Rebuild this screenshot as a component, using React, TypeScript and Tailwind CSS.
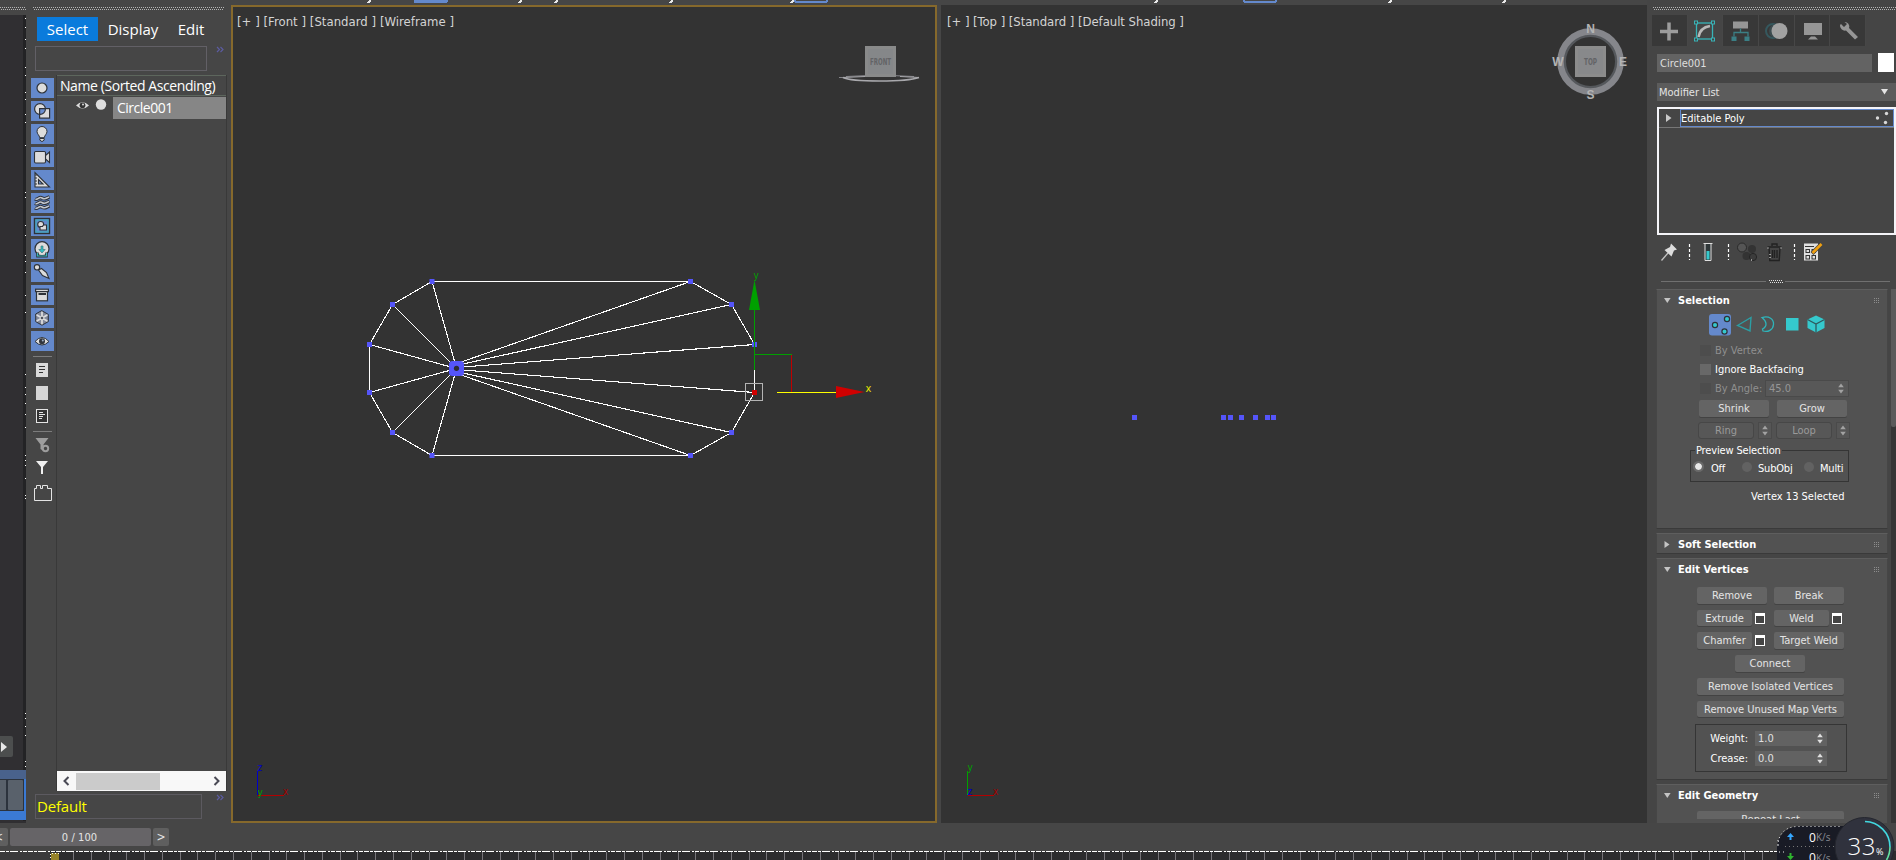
import React from "react";

const UI = "font-['DejaVu_Sans_Condensed','DejaVu_Sans',sans-serif]";

/* ---------- small shared pieces ---------- */

function DottedGrip({ className = "" }: { className?: string }) {
  return (
    <svg className={className} height="3" width="100%" shapeRendering="crispEdges">
      <line x1="0" y1="0.5" x2="100%" y2="0.5" stroke="#b4b4b4" strokeDasharray="1 1" />
      <line x1="1" y1="2.5" x2="100%" y2="2.5" stroke="#b4b4b4" strokeDasharray="1 1" />
    </svg>
  );
}

function Btn({ children, className = "", dim = false }: { children: React.ReactNode; className?: string; dim?: boolean }) {
  return (
    <div
      className={`flex shrink-0 items-center justify-center whitespace-nowrap rounded-[2px] text-[11px] leading-none ${
        dim ? "bg-[#575757] text-[#9a9a9a] outline outline-1 outline-[#474747]" : "bg-[#646464] text-[#e4e4e4] shadow-[0_1px_0_#434343]"
      } ${className}`}
    >
      {children}
    </div>
  );
}

function Spin({ dim = false }: { dim?: boolean }) {
  return (
    <svg width="6" height="11" viewBox="0 0 6 11" className="shrink-0">
      <path d="M3 0.5 5.8 4.2H0.2ZM3 10.5 5.8 6.8H0.2Z" fill={dim ? "#a2a2a2" : "#e0e0e0"} />
    </svg>
  );
}

function SettingsBox() {
  return <div className="h-[11px] w-[10px] shrink-0 border border-t-[3px] border-white bg-[#444]" />;
}

function RolloutTitle({ title, open = true }: { title: string; open?: boolean }) {
  return (
    <div className="flex h-[21px] shrink-0 items-center pl-[7px] pr-[7px]">
      <svg width="7" height="8" viewBox="0 0 7 8" className="shrink-0">
        <path d={open ? "M0 1H6.6L3.3 6Z" : "M0.5 0V7L5.5 3.5Z"} fill="#c4c4c4" />
      </svg>
      <span className="ml-[7px] flex-1 whitespace-nowrap text-[11px] font-bold leading-none text-white">{title}</span>
      <svg width="6" height="6" shapeRendering="crispEdges">
        {[0, 2, 4].map((y) =>
          [0, 2, 4].map((x) => <rect key={`${x}-${y}`} x={x} y={y} width="1" height="1" fill="#8d8d8d" />)
        )}
      </svg>
    </div>
  );
}

/* ---------- far left strip ---------- */

const specks = [18, 27, 39, 48, 67, 75, 92, 99, 114, 122, 145, 192, 197, 225, 235, 255, 261, 272, 295, 312, 374, 387, 394, 403, 414, 427, 455, 460, 465, 478, 495, 498, 713, 718, 726, 735, 761, 766];

function EdgeStrip() {
  return (
    <div className="flex w-[26px] shrink-0 flex-col">
      <DottedGrip className="mt-[7px]" />
      <div className="relative mt-[5px] flex h-[808px] flex-col bg-[#302f32]">
        <svg className="absolute inset-0" width="26" height="806" shapeRendering="crispEdges">
          <rect x="23" width="3" height="806" fill="#232325" />
          {specks.map((y) => (
            <rect key={y} x="25" y={y - 15} width="1" height="1" fill="#fff" />
          ))}
        </svg>
        <div className="mt-[721px] flex h-[21px] w-[13px] items-center rounded-r-[2px] bg-[#4c4e4e]">
          <svg width="8" height="10"><path d="M1 0V10L7 5Z" fill="#e8e8e8" /></svg>
        </div>
        <div className="relative mt-[13px] flex h-[50px] w-[26px] flex-col bg-[#3b7ad4]">
          <div className="h-[9px] bg-[#49628c]" />
          <div className="flex h-[32px] w-[24px] gap-[2px] bg-[#2c333d] py-[1px] pr-[1px]">
            <div className="w-[6px] bg-[#59616b]" />
            <div className="flex-1 rounded-[1px] bg-[#59616b]" />
          </div>
        </div>
      </div>
    </div>
  );
}

/* ---------- scene explorer ---------- */

const dk = "#2e3238";
const lt = "#dcdcdc";

const filterIcons: React.ReactNode[] = [
  <circle cx="11" cy="10" r="5" fill={lt} stroke={dk} strokeWidth="1.2" />,
  <g fill={lt} stroke={dk} strokeWidth="1.2">
    <circle cx="9" cy="8" r="5.4" />
    <rect x="8.6" y="7.6" width="10" height="9.5" fill="#dcdcdc" />
    <path d="M8.6 13.4A5.4 5.4 0 0 0 14.4 7.6H8.6Z" fill="#6b8fd0" />
  </g>,
  <g fill={lt} stroke={dk} strokeWidth="1">
    <path d="M11 2.5a5 5 0 0 1 5 5c0 2.500-2.500 3.800-2.700 6.200H8.700C8.500 11.300 6 10 6 7.500a5 5 0 0 1 5-5Z" />
    <path d="M8.800 14.500h4.400v1.600L11 17.600l-2.200-1.500Z" />
  </g>,
  <g fill={lt} stroke={dk} strokeWidth="1.100">
    <path d="M14.500 8.500 18.500 5V15.500L14.500 12Z" />
    <rect x="3.500" y="4.500" width="11" height="11.500" rx="1.200" />
  </g>,
  <g fill={lt} stroke={dk} strokeWidth="1.100">
    <path d="M4 2.500V17H18.500Z" />
    <path d="M7.500 9.500V14H12Z" fill="#6b8fd0" />
    <path d="M4 5h2M4 8h2M4 11h2M4 14h2" />
  </g>,
  <g fill="none">
    {[5, 9.5, 14].map((y) => (
      <g key={y}>
        <path d={`M4 ${y + 1}C7 ${y + 2.500} 8 ${y - 2} 11 ${y} S15 ${y} 18.500 ${y - 1}`} stroke={dk} strokeWidth="3.600" />
        <path d={`M4.500 ${y + 1}C7 ${y + 2.500} 8 ${y - 2} 11 ${y} S15 ${y} 18 ${y - 1}`} stroke="#c4c8d0" strokeWidth="1.600" />
      </g>
    ))}
  </g>,
  <g>
    <rect x="3.500" y="2.500" width="15" height="15" fill="#6489cc" stroke={dk} strokeWidth="1.400" />
    <rect x="5" y="4" width="12" height="12" fill="none" stroke="#38aeb6" strokeWidth="1" />
    <circle cx="9.700" cy="8.500" r="3" fill={lt} stroke={dk} strokeWidth="1.100" />
    <path d="M9 14V10.500H11.500L12.500 9H15.500V14Z" fill={lt} stroke={dk} strokeWidth="1.100" />
  </g>,
  <g>
    <circle cx="11" cy="9.700" r="7" fill={lt} stroke={dk} strokeWidth="1.200" />
    <path d="M6.500 13.500v3.800h9V13.500" stroke={dk} strokeWidth="2.600" fill="none" />
    <path d="M6.500 14v3h9V14" stroke="#38b4ba" strokeWidth="1.200" fill="none" />
    <path d="M10 7h2v3.500h2.200L11 14 7.800 10.500H10Z" fill="#35c0c4" stroke="#3b6b70" strokeWidth=".6" />
  </g>,
  <g fill={lt} stroke={dk} strokeWidth="1.100">
    <path d="M7.500 8 10.500 6.500 15.500 10.500 18 16.500 11.500 13.500Z" />
    <circle cx="6" cy="5.300" r="2.700" />
  </g>,
  <g fill={lt} stroke={dk} strokeWidth="1.200">
    <rect x="5.500" y="6" width="11" height="9.800" />
    <rect x="4.600" y="4.200" width="12.800" height="2.400" />
    <path d="M7.500 9H15" strokeWidth="2" />
  </g>,
  <g strokeLinecap="round">
    <path d="M11 2.800 17.300 6.400V13.600L11 17.200 4.700 13.600V6.400Z" fill="#83899a" stroke={dk} />
    <path d="M11 4.500V15.500M6.200 7.200 15.800 12.800M15.800 7.200 6.200 12.800" stroke="#dcdcdc" strokeWidth="1.800" />
    <circle cx="11" cy="10" r="1.300" fill="#50545c" />
  </g>,
  <g>
    <path d="M4 10.500Q11 2.500 18 10.500Q11 17.500 4 10.500Z" fill={lt} stroke={dk} />
    <circle cx="11" cy="10.200" r="3" fill="#30343c" />
    <circle cx="11.800" cy="9.400" r="1" fill="#9fb0c8" />
  </g>,
];

function Chevrons() {
  return (
    <svg width="8" height="7" fill="none" stroke="#5c5ca0" strokeWidth="1.200">
      <path d="M1 1 3.500 3.500 1 6M4.500 1 7 3.500 4.500 6" />
    </svg>
  );
}

function Explorer() {
  return (
    <div className="flex w-[205px] shrink-0 flex-col font-['Open_Sans','Noto_Sans',sans-serif] text-[15px] text-white">
      <div className="px-[7px] pt-[7px]"><DottedGrip className="block" /></div>
      <div className="ml-[11px] mt-[7px] flex h-[24px] leading-[25px]">
        <div className="w-[61px] bg-[#0a7bdc] text-center text-[15px]">Select</div>
        <div className="w-[70px] text-center">Display</div>
        <div className="w-[46px] text-center">Edit</div>
      </div>
      <div className="ml-[9px] mt-[5px] flex h-[25px] items-start">
        <div className="h-[25px] w-[172px] border border-[#626066]" />
        <div className="ml-[9px]"><Chevrons /></div>
      </div>
      <div className="mt-[4px] flex h-[716px]">
        <div className="flex w-[30px] shrink-0 flex-col items-start pl-[5px] pt-[3px]">
          <div className="flex flex-col gap-[3px]">
            {filterIcons.map((ic, i) => (
              <div key={i} className="h-[20px] w-[23px] bg-[#6489cc]">
                <svg width="23" height="20" viewBox="0 0 23 20">{ic}</svg>
              </div>
            ))}
          </div>
          <svg width="23" height="152" viewBox="0 351 23 152" className="block">
            <path d="M2 356.500H21M2 431.500H21" stroke="#7c7c7c" />
            <rect x="5" y="363" width="12" height="14" fill="#dadada" />
            <path d="M8 366.500h6M8 369.500h6M8 372.500h4" stroke="#333" />
            <rect x="5" y="386" width="12" height="14" fill="#d6d6d6" />
            <rect x="5.500" y="409.500" width="11" height="13" fill="#333" stroke="#e4e4e4" />
            <path d="M8 412.500h4M8 414.500h6M8 416.500h4M8 418.500h3" stroke="#e4e4e4" />
            <path d="M4.500 438H17.500L12.500 444.500V451L9.500 449V444.500Z" fill="#9d9d9d" />
            <circle cx="14.500" cy="448.500" r="2.700" fill="#444" stroke="#9d9d9d" strokeWidth="2" />
            <path d="M5 461H17L12 467V474H10V467Z" fill="#f0f0f0" />
            <path d="M3.500 488.500H5.500V485.500H9.500V488.500H11.500V485.500H16.500V488.500H20.500V500.500H3.500Z" fill="none" stroke="#e4e4e4" />
          </svg>
        </div>
        <div className="flex w-[171px] flex-col border-x border-[#393939]">
          <div className="h-[21px] whitespace-nowrap border-b border-t border-[#5d665d] pl-[3px] text-[14px] leading-[20px] tracking-[-0.42px]">Name (Sorted Ascending)</div>
          <div className="flex h-[23px] pt-[1px]">
            <svg width="56" height="20" className="shrink-0">
              <path d="M19 8.500Q25.500 2 32 8.500Q25.500 14.500 19 8.500Z" fill="#dedede" />
              <circle cx="25.500" cy="8.300" r="2.900" fill="#333" />
              <circle cx="26" cy="7.600" r="1" fill="#ddd" />
              <circle cx="44" cy="7.500" r="5.200" fill="#dedede" />
            </svg>
            <div className="h-[22px] flex-1 bg-[#868686] pl-[4px] text-[14px] leading-[21px] tracking-[-0.5px]">Circle001</div>
          </div>
          <div className="flex-1" />
          <div className="flex h-[20px] items-center bg-[#f8f8f8]">
            <svg width="19" height="18" fill="none" stroke="#4a4a55" strokeWidth="2"><path d="M11.500 5 7.500 9 11.500 13" /></svg>
            <div className="h-[17px] w-[84px] bg-[#cbcbcb]" />
            <div className="flex-1" />
            <svg width="19" height="18" fill="none" stroke="#4a4a55" strokeWidth="2"><path d="M7.500 5 11.500 9 7.500 13" /></svg>
          </div>
        </div>
      </div>
      <div className="ml-[9px] mt-[3px] flex items-start">
        <div className="h-[25px] w-[167px] border border-[#5c5a60] pl-[1px] text-[15px] leading-[23px] tracking-[-0.2px] text-[#ffff00]">Default</div>
        <div className="ml-[14px]"><Chevrons /></div>
      </div>
    </div>
  );
}

/* ---------- viewports ---------- */

const rim: [number, number][] = [
  [432, 281.5], [690.5, 281.5], [731.5, 304.5], [754.5, 344.5], [754.5, 392.5], [731.5, 432.5],
  [690.5, 455.5], [432, 455.5], [392.5, 432.5], [369.5, 392.5], [369.5, 344.5], [392.5, 304.5],
];

/* each spoke starts on a small 12-sided hub ring */
const hub = rim.map((_, i): [number, number] => {
  const a = ((105 - 30 * i) * Math.PI) / 180;
  return [456.5 + 5.5 * Math.cos(a), 368.5 - 5.5 * Math.sin(a)];
});

function FrontCanvas() {
  return (
    <svg className="absolute inset-0" width="702" height="814" viewBox="233 7 702 814" fontFamily="DejaVu Sans Condensed" >
      <g stroke="#fff" strokeWidth="1.1" fill="none" shapeRendering="crispEdges">
        <polygon points={rim.map((p) => p.join(",")).join(" ")} />
        {rim.map(([x, y], i) => <line key={`${x},${y}`} x1={hub[i][0]} y1={hub[i][1]} x2={x} y2={y} />)}
      </g>
      <g fill="#5555fa">
        {rim.map(([x, y], i) => i !== 4 && <rect key={i} x={x - 2.5} y={y - 2.5} width="5" height="5" />)}
        <rect x="449" y="361" width="15" height="15" rx="3.500" />
      </g>
      <circle cx="456.500" cy="368.300" r="2.600" fill="#2c2c34" />
      <g shapeRendering="crispEdges">
        <path d="M754.500 309V370M754.500 354.500H791.500" stroke="#00a000" />
        <path d="M791.500 355V392" stroke="#c00000" />
        <path d="M777 392.500H837" stroke="#ffff00" />
        <rect x="745.500" y="383.500" width="17" height="17" fill="none" stroke="#b4b4b4" />
        <rect x="752" y="390" width="5" height="5" fill="#d00000" />
      </g>
      <path d="M754.500 280 760 310H749Z" fill="#00a000" />
      <path d="M864.500 392 836 386V398Z" fill="#d00000" />
      <text x="753.500" y="279" fontSize="10" fill="#00a000">y</text>
      <text x="865.500" y="392" fontSize="11" fill="#e6e600">x</text>
      <g shapeRendering="crispEdges">
        <path d="M257.500 771V795" stroke="#0000c8" />
        <path d="M258 795.500H284" stroke="#b40000" />
      </g>
      <text x="257.500" y="771" fontSize="10" fill="#0000c8">z</text>
      <text x="257.500" y="796" fontSize="10" fill="#00a000">y</text>
      <text x="283" y="795" fontSize="10" fill="#a00000">x</text>
      <path d="M839 77.500H843M846 76.500Q879.500 73.500 914 76.500" fill="none" stroke="#85858a" strokeWidth="1" />
      <path d="M843 77.500Q850 81 879.500 81T919 77.500" fill="none" stroke="#a9a9ad" strokeWidth="1.600" />
      <path d="M919 77.500 900 76.500M843 77.500 865 76.500" fill="none" stroke="#a9a9ad" strokeWidth="1" />
      <rect x="865" y="46" width="31" height="31" fill="#898a8a" />
      <rect x="868" y="49" width="25" height="25" fill="#858789" />
      <text x="880.500" y="65" fontSize="8" fontWeight="bold" textAnchor="middle" fill="#626366" textLength="21" lengthAdjust="spacingAndGlyphs">FRONT</text>
    </svg>
  );
}

function TopCanvas() {
  return (
    <svg className="absolute inset-0" width="706" height="818" viewBox="941 5 706 818" fontFamily="DejaVu Sans Condensed">
      <g fill="#5555fa">
        {[1134.5, 1223.5, 1230.5, 1241.5, 1255.5, 1267.5, 1273.5].map((x) => (
          <rect key={x} x={x - 2.5} y="415" width="5" height="5" />
        ))}
      </g>
      <path d="M967.500 771V795" stroke="#00a000" shapeRendering="crispEdges" />
      <path d="M968 795.500H994" stroke="#b40000" shapeRendering="crispEdges" />
      <text x="967.500" y="771" fontSize="10" fill="#00a000">y</text>
      <text x="967.500" y="795" fontSize="10" fill="#0000c8">z</text>
      <text x="993" y="795" fontSize="10" fill="#a00000">x</text>
      <circle cx="1590.500" cy="61.500" r="26" fill="none" stroke="#55585c" strokeWidth="3" />
      <circle cx="1590.500" cy="61.500" r="30" fill="none" stroke="#85868b" strokeWidth="6.500" />
      <rect x="1575" y="46" width="31" height="31" fill="#8c8c8c" />
      <rect x="1578" y="49" width="25" height="25" fill="#88898b" />
      <text x="1590.500" y="65" fontSize="8" fontWeight="bold" textAnchor="middle" fill="#626366" textLength="13" lengthAdjust="spacingAndGlyphs">TOP</text>
      <g fill="#b4b4b4" fontSize="12" textAnchor="middle" fontFamily="Liberation Sans" fontWeight="bold">
        <text x="1590.500" y="33">N</text>
        <text x="1590.500" y="99">S</text>
        <text x="1558" y="66">W</text>
        <text x="1623" y="66">E</text>
      </g>
    </svg>
  );
}

/* ---------- command panel ---------- */

const tabIcons: React.ReactNode[] = [
  <path d="M17 8v18M8 17h18" stroke="#9c9c9c" strokeWidth="3.500" />,
  <g fill="none">
    <rect x="8.500" y="8.500" width="16" height="16" stroke="#38b4b8" strokeWidth="1.300" />
    <path d="M10.500 22.500Q12 13 22 11.500" stroke="#b8b8b8" strokeWidth="2.600" />
    <g fill="#444" stroke="#38b4b8"><rect x="6.500" y="6.500" width="3" height="3" /><rect x="23.500" y="6.500" width="3" height="3" /><rect x="6.500" y="23.500" width="3" height="3" /><rect x="23.500" y="23.500" width="3" height="3" /></g>
  </g>,
  <g transform="translate(1 0)">
    <rect x="9" y="7" width="15" height="7" fill="#969696" />
    <path d="M16.500 14v4M10 22v-4h14v4" stroke="#3b7f85" fill="none" strokeWidth="1.300" />
    <rect x="7.500" y="22" width="5" height="4.500" fill="#3b7f85" /><rect x="20.500" y="22" width="5" height="4.500" fill="#3b7f85" />
  </g>,
  <g transform="translate(1 0)">
    <circle cx="13" cy="16.500" r="7" fill="none" stroke="#35585e" strokeWidth="2" />
    <circle cx="16" cy="16.500" r="7" fill="#3c4c50" />
    <circle cx="19.500" cy="16.500" r="8" fill="#a2a2a2" />
  </g>,
  <g fill="#969696" transform="translate(1 0)"><rect x="8" y="8.500" width="18" height="12" /><path d="M15 22h4l3 3H12Z" /></g>,
  <path transform="translate(2 0)" d="M9 9.500 12 12.500 15 9.500 12.500 7.500A4.500 4.500 0 0 1 17 13.500L26 22.500 23 25 14 16A5 5 0 0 1 8 10.500Z" fill="#969696" />,
];

function Check({ label, on = true }: { label: string; on?: boolean }) {
  return (
    <div className="flex h-[12px] items-center">
      <div className={`h-[11px] w-[11px] ${on ? "bg-[#686868]" : "bg-[#4d4d4d]"}`} />
      <span className={`ml-[4px] whitespace-nowrap text-[11px] leading-none ${on ? "text-white" : "text-[#8f8f8f]"}`}>{label}</span>
    </div>
  );
}

function Radio({ label, on = false, className = "" }: { label: string; on?: boolean; className?: string }) {
  return (
    <div className={`flex shrink-0 items-center ${className}`}>
      <div className={`shrink-0 rounded-full ${on ? "mr-[9px] h-[7px] w-[7px] bg-[#e8e8e8] outline outline-2 outline-[#6a6a6a]" : "mr-[6px] h-[10px] w-[10px] bg-[#626262]"}`} />
      <span className="whitespace-nowrap pt-[3px] text-[11px] leading-none tracking-[-0.2px] text-white">{label}</span>
    </div>
  );
}

function NumberRow({ label, value }: { label: string; value: string }) {
  return (
    <div className="flex h-[15px] items-center">
      <span className="w-[52px] whitespace-nowrap pb-[1px] text-right text-[11px] leading-none text-white">{label}</span>
      <div className="ml-[7px] flex h-[15px] w-[72px] items-center justify-between bg-[#626262] pl-[3px] pr-[4px] text-[11px] leading-none text-[#e0e0e0]">
        {value}<Spin />
      </div>
    </div>
  );
}

const rollout = "flex shrink-0 flex-col rounded-[1px] border border-t-[#5e5e5e] border-x-[#464646] border-b-[#3a3a3a] bg-[#525252]";

function CommandPanel() {
  return (
    <div className={`flex w-[249px] shrink-0 flex-col overflow-hidden bg-[#454545] ${UI}`}>
      <div className="pl-[6px] pt-[7px]"><DottedGrip className="block" /></div>
      <div className="ml-[5px] mt-[5px] flex h-[31px] w-[214px]">
        {tabIcons.map((ic, i) => (
          <div key={i} className={`flex-1 border-r border-[#474747] ${i === 1 ? "bg-[#454545]" : "bg-[#383838]"}`}>
            <svg width="34" height="31" viewBox="0 0.500 34 31">{ic}</svg>
          </div>
        ))}
      </div>
      <div className="ml-[10px] mt-[7px] flex h-[19px] items-center">
        <div className="flex h-[18px] w-[215px] items-center bg-[#636363] pl-[3px] pt-[1px] text-[11px] text-[#dedede]"><span className="relative top-[1px]">Circle001</span></div>
        <div className="ml-[6px] h-[19px] w-[16px] bg-white" />
      </div>
      <div className="ml-[10px] mt-[11px] flex h-[18px] items-center justify-between bg-[#5c5c5c] pl-[2px] pr-[8px] text-[11px] text-[#e4e4e4]">
        <span className="pt-[2px]">Modifier List</span>
        <svg width="7" height="6"><path d="M0 0H7L3.500 5.500Z" fill="#e4e4e4" /></svg>
      </div>
      <div className="ml-[10px] mt-[6px] h-[128px] border-2 border-[#f4f4f8] bg-[#454545]">
        <div className="flex h-[19px] items-center border-b border-[#777]">
          <svg width="21" height="10" className="shrink-0"><path d="M7 1V9L12.500 5Z" fill="#c8c8c8" /></svg>
          <div className="flex h-[18px] flex-1 items-center justify-between border border-[#6489cc] pr-[4px] text-[11px] text-white">
            <span className="pt-[2px]">Editable Poly</span>
            <svg width="14" height="14" fill="#d8d8d8"><circle cx="2.500" cy="7" r="1.700" /><circle cx="11.500" cy="2.500" r="1.700" /><circle cx="10.500" cy="11.500" r="1.700" /></svg>
          </div>
        </div>
      </div>
      <svg className="mt-[5px] block shrink-0" width="249" height="49" viewBox="1647 240 249 49">
        <path d="M1661.500 260.500 1668 253" stroke="#c4c4c4" strokeWidth="1.300" />
        <path d="M1671 243.500 1677 249.500 1674 250.500 1671.500 256.500 1664.500 250 1670 247Z" fill="#dcdcdc" />
        <g stroke="#fff" strokeWidth="1.200" strokeDasharray="3 2"><path d="M1689.500 244V260M1728.500 244V260M1794.500 244V260" /></g>
        <path d="M1703.500 243.500h9M1705 244V260.500H1711V244" fill="#30383a" stroke="#e0e0e0" />
        <rect x="1706.500" y="251" width="3" height="8.500" fill="#35c9cd" />
        <circle cx="1742" cy="247.500" r="4.500" fill="#555" stroke="#2a2a2a" />
        <circle cx="1752" cy="249" r="4" fill="#333" />
        <circle cx="1746.500" cy="256" r="4" fill="#333" /><circle cx="1753" cy="257" r="3.600" fill="#3c3c3c" stroke="#262626" />
        <path d="M1767.500 247h14M1772 246v-2h5v2M1769 248l.800 12.500h9.400l.800-12.500M1772.500 250v8M1774.500 250v8M1777 250v8" fill="none" stroke="#222" strokeWidth="1.400" />
        <path d="M1768 247.500v1M1781 247.500v1M1770 254v1M1770 257v1M1751 260h1" stroke="#fff" />
        <rect x="1804" y="243.500" width="14" height="17" fill="#e0e0e0" />
        <path d="M1805 246.500h9" stroke="#333" />
        <g fill="none" stroke="#333"><rect x="1806" y="249.500" width="3.500" height="3" /><rect x="1812" y="249.500" width="3.500" height="3" /><rect x="1806" y="255.500" width="3.500" height="3.500" /><rect x="1812" y="255.500" width="3.500" height="3.500" /></g>
        <path d="M1812 253.500 1821.500 244" stroke="#444" strokeWidth="4" /><path d="M1812.500 253 1821.500 244" stroke="#f0a010" strokeWidth="2.600" />
        <path d="M1661 281.500H1766M1785 281.500H1890" stroke="#707070" />
        <path d="M1769 280.500h13M1770 282.500h13" stroke="#e0e0e0" strokeDasharray="1 1" shapeRendering="crispEdges" />
      </svg>
      <div className="flex h-[534px] pl-[9px]">
        <div className="flex w-[232px] flex-col overflow-hidden">
          {/* Selection */}
          <div className={`${rollout} h-[240px]`}>
            <RolloutTitle title="Selection" />
            <svg className="ml-[52px] mt-[3px] block shrink-0" width="116" height="22" viewBox="1709 314 116 22">
              <rect x="1709" y="314" width="22" height="21.500" rx="3" fill="#6489cc" />
              <g fill="#35c9cd" stroke={dk} strokeWidth="1.200"><circle cx="1715" cy="325" r="2.600" /><circle cx="1727" cy="319" r="2.600" /><circle cx="1724.500" cy="331.500" r="2.600" /></g>
              <path d="M1737.500 325.500 1751 317.500 1750 331Z" fill="none" stroke="#2c9ea4" strokeWidth="1.400" />
              <path d="M1762 317.500C1769 315.500 1774 319 1773.500 324.500 1773 330 1768 332.500 1763 331L1762.500 329C1767.500 326.500 1767 321.500 1762 317.500Z" fill="none" stroke="#2fb4ba" strokeWidth="1.300" />
              <rect x="1786" y="318" width="12.500" height="12.500" fill="#35c9cd" />
              <path d="M1816 315.500 1824.500 319.500V328L1816 332.500 1807.500 328V319.500Z" fill="#35c9cd" />
              <path d="M1807.500 319.500 1816 324 1824.500 319.500M1816 324V332.500" fill="none" stroke="#2f5a5e" strokeWidth="1.300" />
            </svg>
            <div className="ml-[43px] mt-[8px] flex flex-col">
              <Check label="By Vertex" on={false} />
              <div className="h-[7px]" />
              <Check label="Ignore Backfacing" />
              <div className="mt-[6px] flex h-[15px] w-[148px] items-center">
                <Check label="By Angle:" on={false} />
                <div className="ml-auto flex h-[15px] w-[82px] items-center justify-between bg-[#585858] pl-[3px] pr-[4px] text-[11px] leading-none text-[#969696] outline outline-1 outline-[#4a4a4a]">45.0<Spin dim /></div>
              </div>
            </div>
            <div className="ml-[42px] mt-[4px] flex gap-[8px]">
              <Btn className="h-[17px] w-[70px]">Shrink</Btn>
              <Btn className="h-[17px] w-[70px]">Grow</Btn>
            </div>
            <div className="ml-[42px] mt-[6px] flex items-center">
              <Btn dim className="h-[15px] w-[54px]">Ring</Btn>
              <div className="ml-[6px] flex h-[15px] w-[12px] items-center justify-center bg-[#565656] outline outline-1 outline-[#4a4a4a]"><Spin dim /></div>
              <Btn dim className="ml-[6px] h-[15px] w-[54px]">Loop</Btn>
              <div className="ml-[6px] flex h-[15px] w-[12px] items-center justify-center bg-[#565656] outline outline-1 outline-[#4a4a4a]"><Spin dim /></div>
            </div>
            <fieldset className="ml-[33px] mt-[6px] h-[38px] w-[159px] border border-[#353535]">
              <legend className="ml-[4px] whitespace-nowrap px-[1px] pt-[1px] text-[11px] leading-[11px] tracking-[-0.15px] text-white">Preview Selection</legend>
              <div className="flex h-[21px] items-center">
                <Radio label="Off" on className="ml-[4px] w-[47px]" />
                <Radio label="SubObj" className="w-[62px]" />
                <Radio label="Multi" />
              </div>
            </fieldset>
            <div className="mt-[9px] whitespace-nowrap pl-[94px] text-[11px] leading-[12px] text-white">Vertex 13 Selected</div>
          </div>
          <div className={`${rollout} mt-[4px] h-[21px]`}><RolloutTitle title="Soft Selection" open={false} /></div>
          {/* Edit Vertices */}
          <div className={`${rollout} mt-[4px] h-[222px]`}>
            <RolloutTitle title="Edit Vertices" />
            <div className="ml-[40px] mt-[7px] flex w-[147px] flex-col gap-[6px]">
              <div className="flex gap-[7px]">
                <Btn className="h-[17px] w-[70px]">Remove</Btn>
                <Btn className="h-[17px] w-[70px]">Break</Btn>
              </div>
              <div className="flex items-center">
                <Btn className="mr-[3px] h-[16px] w-[55px]">Extrude</Btn><SettingsBox />
                <Btn className="ml-[9px] mr-[3px] h-[16px] w-[55px]">Weld</Btn><SettingsBox />
              </div>
              <div className="flex items-center">
                <Btn className="mr-[3px] h-[17px] w-[55px]">Chamfer</Btn><SettingsBox />
                <Btn className="ml-[9px] h-[17px] w-[70px]">Target Weld</Btn>
              </div>
              <Btn className="ml-[38px] h-[17px] w-[70px]">Connect</Btn>
              <Btn className="h-[17px]">Remove Isolated Vertices</Btn>
              <Btn className="h-[16px]">Remove Unused Map Verts</Btn>
            </div>
            <div className="ml-[38px] mt-[7px] flex h-[48px] w-[152px] flex-col gap-[5px] border border-[#353535] pt-[6px]">
              <NumberRow label="Weight:" value="1.0" />
              <NumberRow label="Crease:" value="0.0" />
            </div>
          </div>
          {/* Edit Geometry */}
          <div className={`${rollout} mt-[4px] h-[40px] overflow-hidden`}>
            <RolloutTitle title="Edit Geometry" />
            <div className="ml-[40px] mt-[5px] h-[8px] w-[147px] overflow-hidden"><Btn className="h-[17px]">Repeat Last</Btn></div>
          </div>
        </div>
        <div className="ml-[3px] flex-1 bg-[#353535]"><div className="h-[138px] rounded-b-[2px] bg-[#5a5a5a]" /></div>
      </div>
    </div>
  );
}

/* ---------- network / memory badge ---------- */

function MonitorBadge() {
  return (
    <div className="absolute left-[1774px] top-[816px]">
      <svg width="122" height="44" viewBox="1774 816 122 44" className="block" fontFamily="Open Sans">
        <rect x="1777" y="826" width="90" height="60" rx="22" fill="#191b25" />
        <path d="M1778 846C1778 834 1785 827 1797 826.500H1840M1779 852H1784M1778 840V846" fill="none" stroke="#e8e8e8" strokeDasharray="1 3" />
        <path d="M1785 846.500H1834" stroke="#777" strokeDasharray="1 3" />
        <path d="M1790.500 833 1794 837H1791.500V840H1789.500V837H1787Z" fill="#35a7ff" />
        <path d="M1790.500 860 1794 856H1791.500V853H1789.500V856H1787Z" fill="#2fb52f" />
        <text x="1809" y="841.500" fontSize="12" fill="#fff">0</text>
        <text x="1816" y="841" fontSize="10" fill="#8a8c94">K/s</text>
        <text x="1809" y="862" fontSize="12" fill="#fff">0</text>
        <text x="1816" y="862" fontSize="10" fill="#8a8c94">K/s</text>
        <circle cx="1864.500" cy="847" r="29.500" fill="#30323d" stroke="#24262e" />
        <path d="M1865 821.500A25.500 25.500 0 0 1 1890 847" fill="none" stroke="#42d8e0" strokeWidth="1.600" />
        <path d="M1890 847A25.500 25.500 0 0 1 1886.500 860" fill="none" stroke="#63e0a0" strokeWidth="1.600" />
        <text x="1847.500" y="855" fontSize="24" fontWeight="300" fill="#fff" textLength="28">33</text>
        <text x="1876" y="855" fontSize="9" fill="#fff">%</text>
      </svg>
    </div>
  );
}

/* ---------- page ---------- */

export default function App() {
  return (
    <div className="relative flex h-[860px] w-[1896px] flex-col overflow-hidden bg-[#464646]">
      <svg className="absolute left-0 top-0" width="1640" height="4" shapeRendering="crispEdges">
        {[367, 518, 554, 669, 790, 1154, 1388, 1502].map((x) => <path key={x} d={`M${x} 2.500h3M${x + 1} 1.500h3M${x + 2} 0.500h2`} stroke="#e8e8e8" />)}
        <rect x="414" y="-5" width="34" height="8" rx="2" fill="#6489cc" />
        <rect x="795" y="-5" width="32" height="7" rx="2" fill="none" stroke="#6489cc" strokeWidth="2" />
        <rect x="1244" y="-5" width="32" height="7" rx="2" fill="none" stroke="#6489cc" strokeWidth="2" />
      </svg>
      <div className="flex h-[823px] shrink-0">
        <EdgeStrip />
        <Explorer />
        <div className="flex flex-1 gap-[4px] pt-[5px]">
          <div className="relative w-[706px] shrink-0 overflow-hidden border-2 border-[#86692c] bg-[#333]">
            <FrontCanvas />
            <div className={`relative whitespace-nowrap pl-[4px] pt-[7px] text-[13px] leading-[16px] tracking-[0.03px] text-[#d4d4d4] ${UI}`}>[+ ] [Front ] [Standard ] [Wireframe ]</div>
          </div>
          <div className="relative flex-1 overflow-hidden bg-[#333]">
            <TopCanvas />
            <div className={`relative whitespace-nowrap pl-[6px] pt-[9px] text-[13px] leading-[16px] tracking-[-0.05px] text-[#d4d4d4] ${UI}`}>[+ ] [Top ] [Standard ] [Default Shading ]</div>
          </div>
        </div>
        <CommandPanel />
      </div>
      <div className="flex h-[28px] shrink-0 gap-[2px] pt-[5px] text-[12px] leading-[18px] text-[#e4e4e4] font-['DejaVu_Sans_Condensed','DejaVu_Sans',sans-serif]">
        <div className="flex h-[18px] w-[8px] justify-end overflow-hidden rounded-r-[2px] bg-[#5f5f5f] pr-[5px]"><span>&lt;</span></div>
        <div className="h-[18px] w-[141px] rounded-[2px] bg-[#666467] pr-[2px] text-center text-[11px] leading-[20px] tracking-[0.1px]">0 / 100</div>
        <div className="h-[18px] w-[16px] rounded-[2px] bg-[#5f5f5f] text-center">&gt;</div>
      </div>
      <svg width="1896" height="9" className="block shrink-0" shapeRendering="crispEdges">
        <rect width="1896" height="9" fill="#2c2c2e" />
        <rect width="50" height="9" fill="#3a3a3c" />
        <path d="M0 0.500H1896" stroke="#fff" strokeDasharray="5 1 3 1 8 2 2 1 4 1" />
        {Array.from({ length: 104 }, (_, i) => (
          <rect key={i} x={Math.round(73 + i * 17.78)} y="1" width="1" height="8" fill="#77757a" />
        ))}
        <rect x="51" y="2" width="8" height="7" fill="#96832a" />
        <path d="M50.500 3V9M52 2.500H59" stroke="#fff" strokeDasharray="1 2" />
      </svg>
      <MonitorBadge />
    </div>
  );
}
